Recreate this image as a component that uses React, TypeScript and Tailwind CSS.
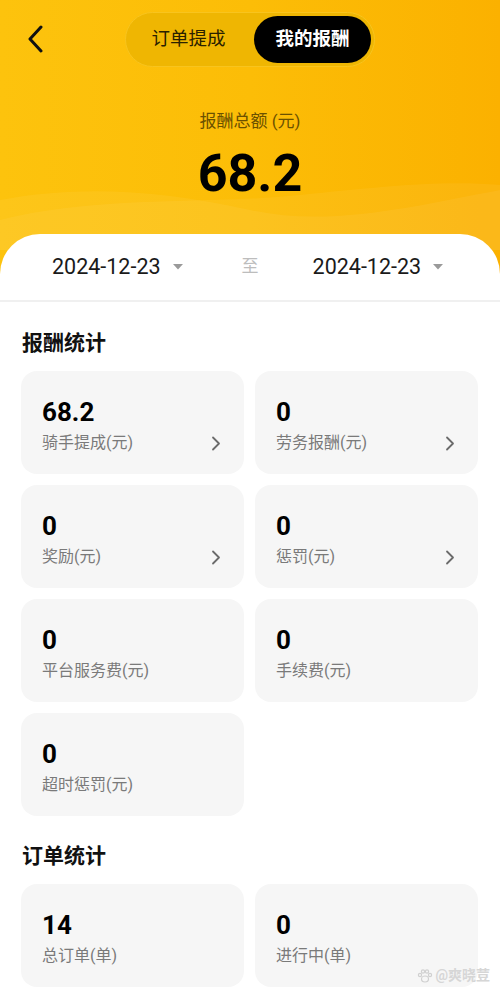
import React from 'react';

const font = { fontFamily: 'Roboto, "Noto Sans CJK SC", sans-serif' };

interface StatItem {
  value: string;
  label: string;
  link?: boolean;
}

const rewardStats: StatItem[] = [
  { value: '68.2', label: '骑手提成(元)', link: true },
  { value: '0', label: '劳务报酬(元)', link: true },
  { value: '0', label: '奖励(元)', link: true },
  { value: '0', label: '惩罚(元)', link: true },
  { value: '0', label: '平台服务费(元)' },
  { value: '0', label: '手续费(元)' },
  { value: '0', label: '超时惩罚(元)' },
];

const orderStats: StatItem[] = [
  { value: '14', label: '总订单(单)' },
  { value: '0', label: '进行中(单)' },
];

const Chevron = () => (
  <svg width="10" height="15" viewBox="0 0 10 15" fill="none">
    <path d="M2 1.5L8 7.5L2 13.5" stroke="#6b6b6b" strokeWidth="1.8" strokeLinecap="round" strokeLinejoin="round" />
  </svg>
);

const Caret = () => (
  <svg width="10" height="6" viewBox="0 0 10 6">
    <path d="M0 0H10L5 5.5Z" fill="#9a9a9a" />
  </svg>
);

const StatCard: React.FC<{ item: StatItem }> = ({ item }) => (
  <div className="h-[103px] rounded-[16px] bg-[#f6f6f6] pl-[21px] pr-[23px] pt-[25px]">
    <div className="text-[26px] leading-[32px] font-bold text-black">{item.value}</div>
    <div className="mt-[4px] flex items-center justify-between">
      <span className="text-[16px] leading-[22px] text-[#7a7a7a]">{item.label}</span>
      {item.link && <Chevron />}
    </div>
  </div>
);

const Section: React.FC<{ title: string; items: StatItem[]; className?: string }> = ({ title, items, className }) => (
  <div className={className}>
    <h2 className="px-[22px] text-[21px] leading-[28px] font-bold text-[#111]">{title}</h2>
    <div className="mt-[14px] grid grid-cols-2 gap-x-[11px] gap-y-[11px] pl-[21px] pr-[22px]">
      {items.map((it, i) => (
        <StatCard key={i} item={it} />
      ))}
    </div>
  </div>
);

export default function App() {
  return (
    <div className="relative h-[1000px] w-[500px] overflow-hidden bg-gradient-to-r from-[#fdc30d] via-[#fcbd07] to-[#fbb100]" style={font}>
      {/* 背景波浪 */}
      <svg className="absolute left-0 top-[150px]" width="500" height="100" viewBox="0 0 500 100" fill="none">
        <path d="M0 50C80 35 160 40 250 60C330 78 420 55 500 40V100H0Z" fill="#ffffff" fillOpacity="0.05" />
        <path d="M0 70C100 45 200 55 300 45C380 37 440 30 500 35V100H0Z" fill="#ffffff" fillOpacity="0.05" />
      </svg>

      {/* 顶部导航 */}
      <div className="relative flex h-[55px] items-center mt-[12px]">
        <div className="absolute left-[26px] top-[13px]">
          <svg width="20" height="28" viewBox="0 0 20 28" fill="none">
            <path d="M15 2L4 14L15 26" stroke="#111" strokeWidth="3" strokeLinecap="round" strokeLinejoin="round" />
          </svg>
        </div>
        <div className="ml-[125px] flex h-[55px] w-[250px] items-center rounded-full border border-[#f8c41e] bg-[#efb602] p-[3px]">
          <div className="flex-1 pr-[6px] text-center text-[18.5px] text-[#2a2100]">订单提成</div>
          <div className="flex h-[47px] w-[117px] items-center justify-center rounded-full bg-black text-[18.5px] font-bold text-white">
            我的报酬
          </div>
        </div>
      </div>

      {/* 报酬总额 */}
      <div className="relative mt-[43px] text-center text-[17px] leading-[22px] text-[#6b5100]">报酬总额 (元)</div>
      <div className="relative mt-[12px] text-center text-[52px] leading-[60px] font-bold text-black">68.2</div>

      {/* 内容卡片 */}
      <div className="relative mt-[30px] rounded-t-[40px] bg-white pb-[40px]">
        <div className="flex h-[66px] items-center pl-[52px]">
          <span className="text-[21.5px] text-[#1a1a1a]">2024-12-23</span>
          <span className="ml-[12px]"><Caret /></span>
          <span className="ml-[59px] text-[17px] text-[#bdbdbd]">至</span>
          <span className="ml-[54px] text-[21.5px] text-[#1a1a1a]">2024-12-23</span>
          <span className="ml-[12px]"><Caret /></span>
        </div>
        <div className="h-[2px] bg-[#f0f0f0]" />

        <Section title="报酬统计" items={rewardStats} className="pt-[27px]" />
        <Section title="订单统计" items={orderStats} className="pt-[26px]" />
      </div>

      {/* 水印 */}
      <div className="absolute right-[10px] top-[965px] flex items-center gap-[2px] text-[14px] font-bold text-[#d6d6d6]">
        <svg width="16" height="16" viewBox="0 0 16 16" fill="none" stroke="#d0d0d0" strokeWidth="1.2">
          <ellipse cx="8" cy="11" rx="3.5" ry="3" />
          <circle cx="3" cy="7" r="1.6" />
          <circle cx="6" cy="3.5" r="1.6" />
          <circle cx="10" cy="3.5" r="1.6" />
          <circle cx="13" cy="7" r="1.6" />
        </svg>
        <span>@爽晓荳</span>
      </div>
    </div>
  );
}
